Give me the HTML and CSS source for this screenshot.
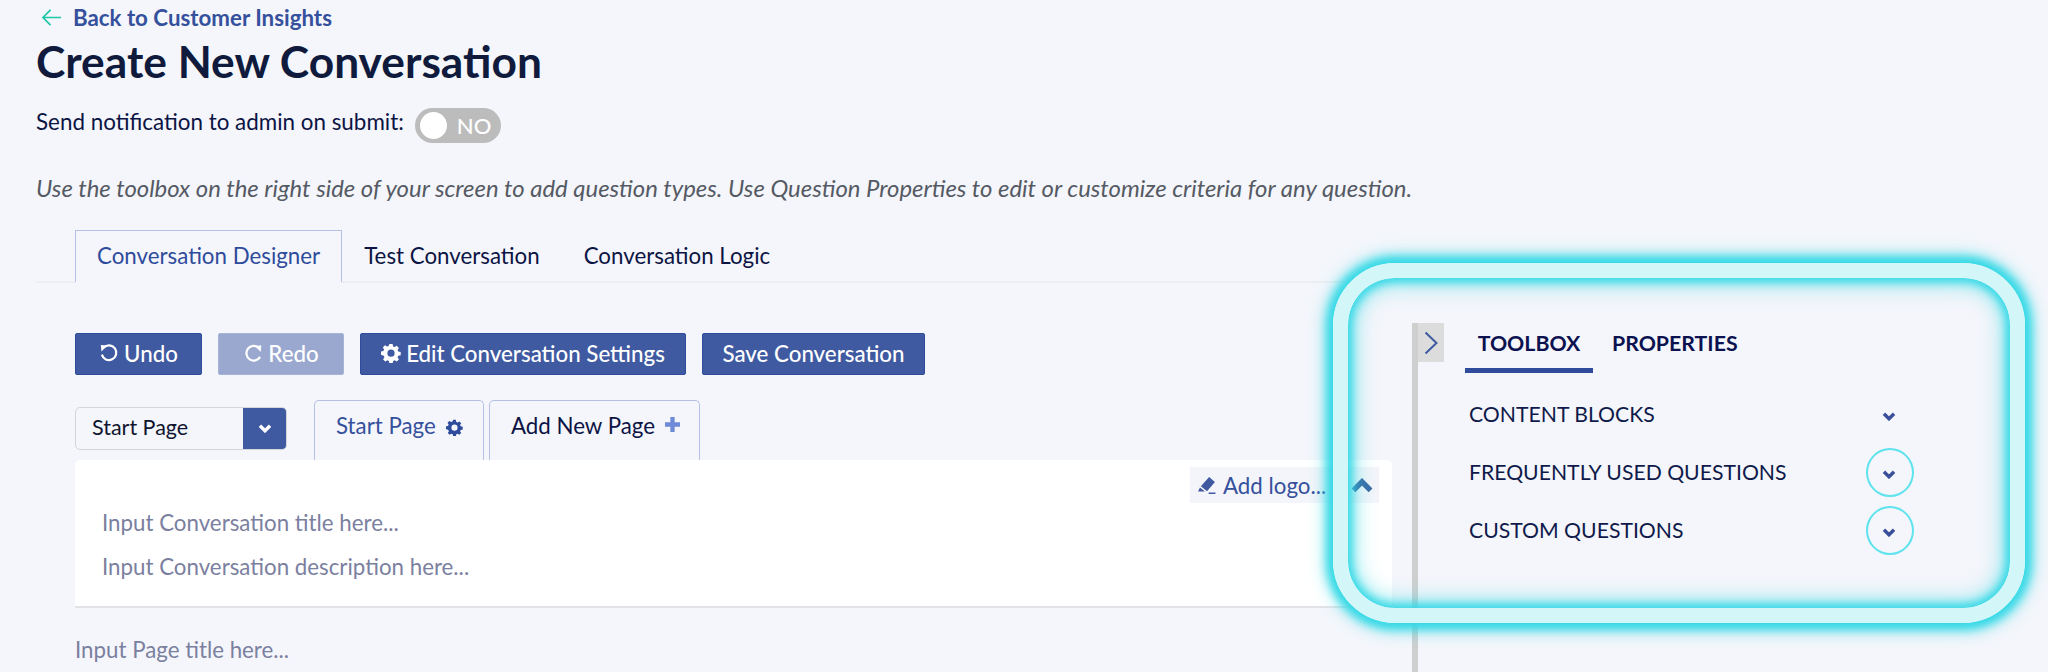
FILE: index.html
```html
<!DOCTYPE html>
<html lang="en">
<head>
<meta charset="utf-8">
<title>Create New Conversation</title>
<link rel="stylesheet" href="styles.css">
</head>
<body>
<div class="page">
  <main class="main">
    <a class="back">
      <svg class="back-icon" viewBox="0 0 22 20"><path d="M10 2 2 10l8 8M2 10h19"/></svg>
      <span>Back to Customer Insights</span>
    </a>
    <h1 class="title">Create New Conversation</h1>
    <div class="notify">
      <span class="notify-label">Send notification to admin on submit:</span>
      <span class="toggle"><i class="knob"></i><b class="toggle-text">NO</b></span>
    </div>
    <p class="hint">Use the toolbox on the right side of your screen to add question types. Use Question Properties to edit or customize criteria for any question.</p>
    <nav class="tabs">
      <a class="tab active">Conversation Designer</a>
      <a class="tab">Test Conversation</a>
      <a class="tab">Conversation Logic</a>
    </nav>
    <div class="designer">
      <div class="actions">
        <button class="btn btn-undo">
          <svg class="btn-icon" viewBox="0 0 18 18"><path class="ln" d="M4.200 4.200A6.600 6.600 0 1 1 2.600 10.500"/><path class="fl" d="M1.600 1.800 7.400 2.200 2.200 7.600z"/></svg>
          Undo
        </button>
        <button class="btn btn-redo">
          <svg class="btn-icon" viewBox="0 0 18 18"><path class="ln" d="M14 4.200A6.600 6.600 0 1 0 15.400 12.500"/><path class="fl" d="M16.400 2 11 3 16 8z"/></svg>
          Redo
        </button>
        <button class="btn btn-settings">
          <svg class="btn-icon" viewBox="0 0 20 20"><path class="gear" fill-rule="evenodd" d="M8.400 1h3.200l.5 2.400 1.500.7 2.100-1.300 2.200 2.200-1.300 2.100.7 1.500 2.400.5v3.200l-2.400.5-.7 1.500 1.300 2.100-2.200 2.200-2.100-1.300-1.500.7-.5 2.400H8.400l-.5-2.400-1.500-.7-2.100 1.300-2.200-2.200 1.300-2.100-.7-1.500L0 11.800V8.600l2.400-.5.7-1.500-1.300-2.100L4 2.300l2.100 1.300 1.500-.7zM10 6.600a3.600 3.600 0 1 0 0 7.200 3.600 3.600 0 0 0 0-7.200z"/></svg>
          Edit Conversation Settings
        </button>
        <button class="btn btn-save">Save Conversation</button>
      </div>
      <div class="pages">
        <div class="select">
          <span class="select-label">Start Page</span>
          <span class="select-arrow"><svg class="chev-sm" viewBox="0 0 12 8"><path d="M1.500 1.500 6 6l4.500-4.500"/></svg></span>
        </div>
        <div class="page-tabs">
          <a class="page-tab current">Start Page
            <svg class="tab-gear" viewBox="0 0 20 20"><path class="gear" fill-rule="evenodd" d="M8.400 1h3.200l.5 2.400 1.500.7 2.100-1.300 2.200 2.200-1.300 2.100.7 1.500 2.400.5v3.200l-2.400.5-.7 1.500 1.300 2.100-2.200 2.200-2.100-1.300-1.500.7-.5 2.400H8.400l-.5-2.400-1.500-.7-2.100 1.300-2.200-2.200 1.300-2.100-.7-1.500L0 11.800V8.600l2.400-.5.7-1.500-1.300-2.100L4 2.300l2.100 1.300 1.500-.7zM10 6.600a3.600 3.600 0 1 0 0 7.200 3.600 3.600 0 0 0 0-7.200z"/></svg>
          </a>
          <a class="page-tab">Add New Page
            <svg class="tab-plus" viewBox="0 0 14 14"><path d="M7 0v14M0 7h14"/></svg>
          </a>
        </div>
      </div>
      <section class="card">
        <div class="logo-bar">
          <svg class="pencil" viewBox="0 0 18 18"><path d="M11.500 1 17 5.800 9.500 14.500 3.700 9.600zM2.800 10.800l4.700 4H1zM11 15.600h6.500V17H11z"/></svg>
          <span>Add logo...</span>
          <svg class="chev-up" viewBox="0 0 20 14"><path d="M2 11.500 10 3.500l8 8"/></svg>
        </div>
        <div class="placeholder">Input Conversation title here...</div>
        <div class="placeholder">Input Conversation description here...</div>
      </section>
      <div class="page-title">Input Page title here...</div>
    </div>
  </main>
  <aside class="side">
    <span class="collapse"><svg viewBox="0 0 14 24"><path d="M1.500 1.500 12.500 12 1.500 22.500"/></svg></span>
    <div class="side-tabs">
      <span class="side-tab selected">TOOLBOX</span>
      <span class="side-tab">PROPERTIES</span>
    </div>
    <ul class="groups">
      <li class="group"><span>CONTENT BLOCKS</span><span class="group-btn"><svg class="chev-sm blue" viewBox="0 0 12 8"><path d="M1.500 1.500 6 6l4.500-4.500"/></svg></span></li>
      <li class="group"><span>FREQUENTLY USED QUESTIONS</span><span class="group-btn ring"><svg class="chev-sm blue" viewBox="0 0 12 8"><path d="M1.500 1.500 6 6l4.500-4.500"/></svg></span></li>
      <li class="group"><span>CUSTOM QUESTIONS</span><span class="group-btn ring"><svg class="chev-sm blue" viewBox="0 0 12 8"><path d="M1.500 1.500 6 6l4.500-4.500"/></svg></span></li>
    </ul>
  </aside>
  <div class="highlight"></div>
</div>
</body>
</html>
```
FILE: styles.css
```css
* { box-sizing: border-box; }
html, body { margin: 0; height: 672px; overflow: hidden; }
body {
  background: #f4f6fb;
  color: #0c1444;
  font-family: "Lato", "Noto Sans", sans-serif;
  font-size: 22.400px;
}
.page { position: relative; display: flex; height: 672px; overflow: hidden; }

.main { width: 1412px; flex: none; padding: 0 20px 0 36px; }
.back {
  display: flex; align-items: center; gap: 11px;
  height: 34px; padding-left: 5px;
  color: #35509c; font-size: 22.300px; font-weight: 700;
}
.back-icon { width: 21px; height: 19px; fill: none; stroke: #1fc7a9; stroke-width: 1.800; }
.title { margin: 2px 0 0; height: 50px; line-height: 50px; font-size: 44.300px; font-weight: 700; color: #0f1a3c; }
.notify { display: flex; align-items: center; gap: 11px; height: 35px; margin-top: 22px; }
.notify-label { padding-bottom: 8px; }
.toggle {
  display: flex; align-items: center; gap: 10px;
  width: 86px; height: 35px; padding-left: 5px;
  background: #bcbcbc; border-radius: 18px;
}
.knob { width: 27px; height: 27px; border-radius: 50%; background: #fff; }
.toggle-text { color: #fff; font-weight: 500; font-size: 22px; }
.hint { margin: 29px 0 0; height: 32px; line-height: 32px; font-style: italic; color: #555a64; font-size: 23.900px; white-space: nowrap; }

.tabs { display: flex; height: 53px; margin-top: 26px; padding-left: 39px; border-bottom: 2px solid #eceef2; }
.tab { height: 53px; padding: 0 21px; line-height: 50px; font-size: 22.300px; border: 1px solid transparent; }
.tab.active { color: #2f4b9b; border: 1px solid #b5c1e2; border-bottom: 2px solid #f4f6fb; }

.designer { padding: 50px 0 0 39px; }
.actions { display: flex; gap: 16px; height: 42px; }
.btn {
  display: flex; align-items: center; justify-content: center; gap: 5px;
  height: 42px; border: 1px solid #2f4b9b; border-radius: 2px; padding: 0 0 2px;
  background: #3f5aa1; color: #fff; font: 500 22.300px "Lato", sans-serif;
}
.btn-undo { width: 127px; }
.btn-redo { width: 126px; background: #9aa8cf; border-color: #a8b4d6; }
.btn-settings { width: 326px; }
.btn-save { width: 223px; }
.btn-icon { width: 20px; height: 20px; }
.ln { fill: none; stroke: #fff; stroke-width: 2; }
.fl { fill: #fff; }
.gear { fill: #fff; }

.pages { display: flex; margin-top: 25px; height: 60px; }
.select {
  display: flex; width: 212px; height: 43px; margin-top: 7px;
  border: 1px solid #d3d5da; border-radius: 5px; overflow: hidden;
}
.select-label { flex: 1; line-height: 38px; padding-left: 16px; color: #10142e; font-size: 21.500px; }
.select-arrow { width: 43px; display: flex; align-items: center; justify-content: center; background: #3f5aa1; }
.chev-sm { width: 14px; height: 9px; fill: none; stroke: #fff; stroke-width: 3; }
.chev-sm.blue { stroke: #3a4f9a; }
.page-tabs { display: flex; gap: 5px; margin-left: 27px; }
.page-tab {
  display: flex; align-items: center; gap: 10px;
  height: 60px; padding: 0 0 10px 21px;
  border: 1px solid #b5c1e2; border-bottom: 0; border-radius: 5px 5px 0 0;
  font-size: 22.300px;
}
.page-tab.current { width: 170px; color: #35509c; }
.page-tab:not(.current) { width: 211px; }
.tab-gear { width: 17px; height: 17px; margin-top: 3px; }
.tab-gear .gear { fill: #2f4b9b; }
.tab-plus { width: 15px; height: 15px; fill: none; stroke: #6f8ad6; stroke-width: 4; margin-bottom: 3px; }

.card {
  position: relative; height: 148px; padding: 42px 0 0 27px;
  background: #fff; border-bottom: 2px solid #e2e3e6; border-radius: 5px 5px 0 0;
}
.logo-bar {
  position: absolute; top: 7px; right: 13px;
  display: flex; align-items: center; gap: 7px;
  width: 189px; height: 36px; padding-left: 7px;
  background: #f4f5fa; color: #35509c; font-size: 22.300px;
}
.pencil { width: 19px; height: 19px; fill: #3f5aa1; }
.chev-up { width: 22px; height: 15px; margin-left: 18px; fill: none; stroke: #3a6aa6; stroke-width: 5; flex: none; }
.placeholder { height: 44px; line-height: 42px; color: #7b809f; font-size: 22.300px; }
.page-title { margin-top: 27px; line-height: 30px; color: #7b809f; font-size: 22.300px; }

.side {
  position: relative; flex: 1; margin-top: 323px;
  border-left: 6px solid #cfcfcf; padding-left: 47px;
}
.collapse {
  position: absolute; left: 0; top: 0;
  display: flex; align-items: center; justify-content: center;
  width: 26px; height: 39px; background: #dcdcdc;
}
.collapse svg { width: 14px; height: 24px; fill: none; stroke: #3f5aa1; stroke-width: 2; }
.side-tabs { display: flex; gap: 6px; height: 50px; }
.side-tab { height: 50px; padding: 0 13px; line-height: 40px; font-weight: 700; font-size: 21.300px; color: #0c1250; }
.side-tab.selected { border-bottom: 5px solid #2f4b9b; width: 128px; text-align: center; padding: 0; }
.groups { list-style: none; margin: 12px 0 0; padding: 0 0 0 4px; width: 449px; }
.group { display: flex; align-items: center; justify-content: space-between; height: 58px; font-size: 21.200px; color: #0f1a4a; }
.group-btn { display: flex; align-items: center; justify-content: center; width: 48px; height: 49px; }
.group-btn .chev-sm { margin-left: -3px; margin-top: 5px; }
.ring { border: 2px solid #5fe3ee; border-radius: 50%; }

.highlight {
  position: absolute; left: 1333px; top: 263px; width: 692px; height: 360px;
  border: 15px solid #d3f7f9; border-radius: 62px;
  box-shadow: 0 0 8px 6px #34d9e6, 0 0 16px 8px rgba(52,217,230,.6), inset 0 0 8px 4px #34d9e6, inset 0 0 20px 8px rgba(52,217,230,.5);
}
```
